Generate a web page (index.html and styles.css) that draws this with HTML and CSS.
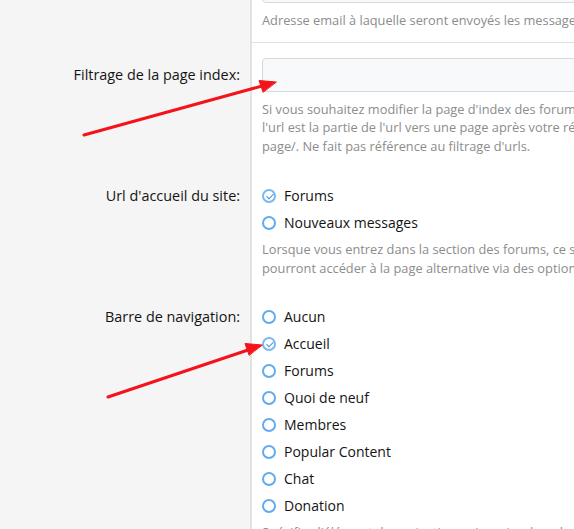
FILE: index.html
```html
<!DOCTYPE html>
<html lang="fr">
<head>
<meta charset="utf-8">
<title>Options</title>
<link rel="stylesheet" href="styles.css">
</head>
<body>
<div class="page">
  <div class="row row-first">
    <div class="label"></div>
    <div class="ctrl">
      <div class="input"></div>
      <div class="hint"><span>Adresse email à laquelle seront envoyés les messages du formulaire de contact.</span></div>
    </div>
  </div>

  <div class="row row-input">
    <div class="label"><span class="lbl lbl-input">Filtrage de la page index:</span></div>
    <div class="ctrl">
      <div class="input"></div>
      <div class="hint">
        <span>Si vous souhaitez modifier la page d'index des forums, entrez ici l'url de la nouvelle page. Le chemin de</span>
        <span>l'url est la partie de l'url vers une page après votre répertoire racine, par exemple forums/ ou</span>
        <span>page/. Ne fait pas référence au filtrage d'urls.</span>
      </div>
    </div>
  </div>

  <div class="row">
    <div class="label"><span class="lbl">Url d'accueil du site:</span></div>
    <div class="ctrl">
      <ul class="radios">
        <li class="radio checked"><i class="dot"></i>Forums</li>
        <li class="radio"><i class="dot"></i>Nouveaux messages</li>
      </ul>
      <div class="hint">
        <span>Lorsque vous entrez dans la section des forums, ce sera la page affichée par défaut. Les utilisateurs</span>
        <span>pourront accéder à la page alternative via des options de navigation.</span>
      </div>
    </div>
  </div>

  <div class="row row-nav">
    <div class="label"><span class="lbl">Barre de navigation:</span></div>
    <div class="ctrl">
      <ul class="radios">
        <li class="radio"><i class="dot"></i>Aucun</li>
        <li class="radio checked"><i class="dot"></i>Accueil</li>
        <li class="radio"><i class="dot"></i>Forums</li>
        <li class="radio"><i class="dot"></i>Quoi de neuf</li>
        <li class="radio"><i class="dot"></i>Membres</li>
        <li class="radio"><i class="dot"></i>Popular Content</li>
        <li class="radio"><i class="dot"></i>Chat</li>
        <li class="radio"><i class="dot"></i>Donation</li>
      </ul>
      <div class="hint">
        <span>Spécifiez l'élément de navigation qui servira de « chemin d'accueil » pour les pages du site.</span>
      </div>
    </div>
  </div>
</div>

<svg class="arrows" width="574" height="529" viewBox="0 0 574 529" aria-hidden="true">
  <g stroke="#f5131a" stroke-width="3" stroke-linecap="round" fill="#f5131a">
    <line x1="84" y1="135" x2="262" y2="86"/>
    <polygon points="276,82 259,80.5 263,92" stroke-width="1" stroke-linejoin="round"/>
    <line x1="108" y1="397" x2="248" y2="350"/>
    <polygon points="262,345 245,343.5 249,355" stroke-width="1" stroke-linejoin="round"/>
  </g>
</svg>
</body>
</html>
```

FILE: styles.css
```css
html, body {
  margin: 0;
  padding: 0;
  background: #ffffff;
  overflow: hidden;
}
body {
  width: 574px;
  height: 529px;
  position: relative;
  font-family: "Open Sans", "Noto Sans", "DejaVu Sans", sans-serif;
  color: #141414;
}
.page {
  width: 1000px;
  margin-top: -31px;
}
.row {
  display: grid;
  grid-template-columns: 252px 1fr;
}
.label {
  background: #f5f5f5;
  border-right: 2px solid #e2e2e2;
  padding: 14px 10px 13px 0;
  text-align: right;
  font-size: 14.4px;
}
.ctrl {
  padding: 14px 0 13px 10px;
}
.row-first .ctrl {
  padding-top: 0;
  padding-bottom: 12px;
  border-bottom: 1px solid #e0e0e0;
}
.row-first .label { padding: 0; }
.row-input .ctrl,
.row-input .label { padding-top: 15px; }
.row-nav .ctrl,
.row-nav .label { padding-top: 13px; }
.lbl {
  display: block;
  line-height: 27px;
}
.lbl-input {
  line-height: 34px;
}
.input {
  width: 600px;
  height: 32px;
  border: 1px solid #d6d8db;
  border-radius: 4px;
  background: #f7f9fb;
}
.hint {
  margin-top: 8px;
  font-size: 12.8px;
  line-height: 18.5px;
  color: #8c8c8c;
}
.hint span {
  display: block;
  white-space: nowrap;
}
.radios {
  list-style: none;
  margin: 0;
  padding: 0;
  font-size: 14px;
}
.radios + .hint { margin-top: 4px; }
.radio {
  display: flex;
  align-items: center;
  gap: 8px;
  height: 27px;
}
.dot {
  box-sizing: border-box;
  width: 14px;
  height: 14px;
  border: 2px solid #62abf1;
  border-radius: 50%;
  position: relative;
  flex: none;
}
.checked .dot {
  border-color: #7ab8f3;
}
.checked .dot::after {
  content: "";
  position: absolute;
  left: 3.5px;
  top: 1px;
  width: 3px;
  height: 6px;
  border-right: 1.8px solid #4b94dc;
  border-bottom: 1.8px solid #4b94dc;
  transform: rotate(45deg);
}
.arrows {
  position: absolute;
  left: 0;
  top: 0;
  pointer-events: none;
}
```
